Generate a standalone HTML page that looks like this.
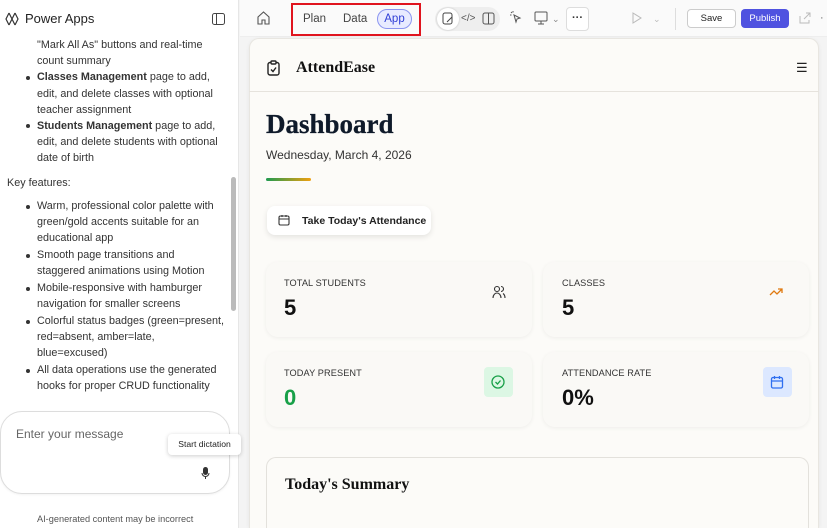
<!DOCTYPE html>
<html style="overflow:hidden;width:827px;height:528px"><head><meta charset="utf-8"><style>
*{margin:0;padding:0;box-sizing:border-box}
html,body{overflow:hidden}
body{width:827px;height:528px;font-family:"Liberation Sans",sans-serif;background:#f4f4f4;position:relative;color:#242424}
.a{position:absolute}
#side{left:0;top:0;width:239px;height:528px;background:#fff;border-right:1px solid #e6e6e6}
.t{position:absolute;font-size:10.8px;color:#333;white-space:nowrap;line-height:16px}
.dot{position:absolute;width:4px;height:4px;border-radius:50%;background:#333}
.serif{font-family:"Liberation Serif",serif;font-weight:bold}
.card{position:absolute;background:#faf9f6;border-radius:12px;box-shadow:0 1px 4px rgba(0,0,0,.06)}
.lbl{position:absolute;font-size:9.2px;color:#333;letter-spacing:.1px}
.num{position:absolute;font-size:22px;font-weight:bold;color:#111}
</style></head><body>
<div id="side" class="a">
 <svg class="a" style="left:5px;top:12px" width="14" height="15" viewBox="0 0 14 15" fill="none" stroke="#333" stroke-width="1.2"><path d="M4 1L1 7l3 6M10 1l3 6-3 6M4 1l6 12M10 1L4 13"/></svg>
 <div class="t" style="left:25px;top:11px;font-size:13px;color:#222">Power Apps</div>
 <svg class="a" style="left:212px;top:13px" width="13" height="12" viewBox="0 0 13 12" fill="none" stroke="#444"><rect x=".5" y=".5" width="12" height="11" rx="2"/><path d="M4.5 1v10"/></svg>
 <div class="t" style="left:37px;top:37px">"Mark All As" buttons and real-time</div>
 <div class="t" style="left:37px;top:53px">count summary</div>
 <div class="dot" style="left:26px;top:76px"></div>
 <div class="t" style="left:37px;top:69px"><b>Classes Management</b> page to add,</div>
 <div class="t" style="left:37px;top:86px">edit, and delete classes with optional</div>
 <div class="t" style="left:37px;top:102px">teacher assignment</div>
 <div class="dot" style="left:26px;top:124px"></div>
 <div class="t" style="left:37px;top:118px"><b>Students Management</b> page to add,</div>
 <div class="t" style="left:37px;top:134px">edit, and delete students with optional</div>
 <div class="t" style="left:37px;top:150px">date of birth</div>
 <div class="t" style="left:7px;top:175px">Key features:</div>
 <div class="dot" style="left:26px;top:205px"></div>
 <div class="t" style="left:37px;top:198px">Warm, professional color palette with</div>
 <div class="t" style="left:37px;top:214px">green/gold accents suitable for an</div>
 <div class="t" style="left:37px;top:230px">educational app</div>
 <div class="dot" style="left:26px;top:254px"></div>
 <div class="t" style="left:37px;top:247px">Smooth page transitions and</div>
 <div class="t" style="left:37px;top:263px">staggered animations using Motion</div>
 <div class="dot" style="left:26px;top:287px"></div>
 <div class="t" style="left:37px;top:280px">Mobile-responsive with hamburger</div>
 <div class="t" style="left:37px;top:296px">navigation for smaller screens</div>
 <div class="dot" style="left:26px;top:320px"></div>
 <div class="t" style="left:37px;top:313px">Colorful status badges (green=present,</div>
 <div class="t" style="left:37px;top:329px">red=absent, amber=late,</div>
 <div class="t" style="left:37px;top:345px">blue=excused)</div>
 <div class="dot" style="left:26px;top:369px"></div>
 <div class="t" style="left:37px;top:362px">All data operations use the generated</div>
 <div class="t" style="left:37px;top:378px">hooks for proper CRUD functionality</div>
 <div class="a" style="left:231px;top:177px;width:5px;height:134px;background:#bbb;border-radius:3px"></div>
 <div class="a" style="left:0;top:411px;width:230px;height:83px;border:1px solid #ddd;border-radius:22px;background:#fff;box-shadow:0 1px 2px rgba(0,0,0,.05)"></div>
 <div class="t" style="left:16px;top:426px;font-size:12px;color:#666">Enter your message</div>
 <div class="a" style="left:168px;top:434px;width:73px;height:21px;background:#fff;border-radius:4px;box-shadow:0 1px 4px rgba(0,0,0,.2);font-size:8.6px;color:#222;line-height:21px;text-align:center">Start dictation</div>
 <svg class="a" style="left:201px;top:467px" width="9" height="13" viewBox="0 0 9 13"><rect x="2" y="0" width="5" height="8" rx="2.5" fill="#333"/><path d="M1 6a3.5 3.5 0 0 0 7 0M4.5 10v2" stroke="#333" fill="none"/></svg>
 <div class="t" style="left:37px;top:511px;font-size:9.2px;color:#555">AI-generated content may be incorrect</div>
</div>
<div class="a" style="left:240px;top:0;width:587px;height:37px;background:#fafafa;border-bottom:1px solid #eee"></div>
<svg class="a" style="left:257px;top:11px" width="13" height="14" viewBox="0 0 13 14" fill="none" stroke="#555" stroke-width="1.1"><path d="M1 6l5.5-5 5.5 5v7H8V9H5v4H1z"/></svg>
<div class="a" style="left:291px;top:3px;width:130px;height:33px;border:2px solid #e0141e"></div>
<div class="t" style="left:303px;top:11px;font-size:11.5px;color:#444">Plan</div>
<div class="t" style="left:343px;top:11px;font-size:11.5px;color:#444">Data</div>
<div class="a" style="left:377px;top:9px;width:35px;height:20px;border-radius:10px;background:#e8ebff;border:1px solid #8a94f0;color:#2f3ed6;font-size:11.5px;text-align:center;line-height:18px">App</div>
<div class="a" style="left:435px;top:7px;width:65px;height:24px;border-radius:12px;background:#eee"></div>
<div class="a" style="left:437px;top:8px;width:22px;height:22px;border-radius:11px;background:#fff;box-shadow:0 0 2px rgba(0,0,0,.2)"></div>
<svg class="a" style="left:442px;top:12px" width="12" height="13" viewBox="0 0 12 13" fill="none" stroke="#444"><rect x="1" y="1" width="9" height="11" rx="2"/><path d="M5 10l5-5"/></svg>
<div class="t" style="left:461px;top:11px;font-size:10px;color:#555">&lt;/&gt;</div>
<svg class="a" style="left:482px;top:12px" width="13" height="13" viewBox="0 0 13 13" fill="none" stroke="#555"><rect x="1" y="1" width="11" height="11" rx="2"/><path d="M6.5 1v11"/></svg>
<svg class="a" style="left:509px;top:11px" width="13" height="14" viewBox="0 0 13 14" fill="none" stroke="#555"><path d="M5 4l6 3-3 1-1 3z M2 1l1 1M1 4h1.5M4 0v1.5"/></svg>
<svg class="a" style="left:534px;top:11px" width="14" height="14" viewBox="0 0 14 14" fill="none" stroke="#555"><rect x="1" y="1" width="12" height="9" rx="1"/><path d="M7 10v3M4 13h6"/></svg>
<div class="t" style="left:552px;top:11px;font-size:9px;color:#888">⌄</div>
<div class="a" style="left:566px;top:7px;width:23px;height:24px;border:1px solid #ddd;border-radius:4px;background:#fff;text-align:center;font-size:11px;line-height:20px;font-weight:bold;color:#333">···</div>
<svg class="a" style="left:632px;top:12px" width="10" height="12" viewBox="0 0 10 12" fill="none" stroke="#bbb"><path d="M1 1l8 5-8 5z"/></svg>
<div class="t" style="left:653px;top:11px;font-size:9px;color:#bbb">⌄</div>
<div class="a" style="left:675px;top:8px;width:1px;height:22px;background:#ddd"></div>
<div class="a" style="left:687px;top:9px;width:49px;height:19px;border:1px solid #ccc;border-radius:4px;background:#fff;font-size:9.5px;text-align:center;line-height:17px;color:#222">Save</div>
<div class="a" style="left:741px;top:9px;width:48px;height:19px;border-radius:4px;background:#4f52e0;font-size:9.5px;text-align:center;line-height:19px;color:#fff">Publish</div>
<svg class="a" style="left:799px;top:12px" width="12" height="12" viewBox="0 0 12 12" fill="none" stroke="#bbb"><path d="M1 4v7h9V8M5 7l6-6M7 1h4v4"/></svg>
<div class="t" style="left:820px;top:10px;color:#666">·</div>
<div class="a" style="left:249px;top:38px;width:570px;height:490px;background:#fcfbf8;border:1px solid #e8e6e1;border-bottom:none;border-radius:10px 10px 0 0;box-shadow:0 1px 4px rgba(0,0,0,.06)"></div>
<div class="a" style="left:249px;top:91px;width:570px;height:1px;background:#e6e3dd"></div>
<svg class="a" style="left:267px;top:60px" width="13" height="16" viewBox="0 0 13 16" fill="none" stroke="#222" stroke-width="1.4"><rect x="1" y="2.5" width="11" height="12.5" rx="2"/><rect x="4" y="1" width="5" height="3" rx="1" fill="#fcfbf8"/><path d="M4 9.5l2 2 3-4"/></svg>
<div class="a serif" style="left:296px;top:59px;font-size:16px;color:#111">AttendEase</div>
<div class="a" style="left:796px;top:60px;font-size:13px;color:#222">☰</div>
<div class="a serif" style="left:266px;top:109px;font-size:27px;color:#0f1a2a;-webkit-text-stroke:.3px #0f1a2a">Dashboard</div>
<div class="t" style="left:266px;top:147px;font-size:12px;color:#333">Wednesday, March 4, 2026</div>
<div class="a" style="left:266px;top:178px;width:45px;height:3px;border-radius:2px;background:linear-gradient(90deg,#1f9a50,#f0a010)"></div>
<div class="a" style="left:267px;top:206px;width:164px;height:29px;background:#fff;border-radius:8px;box-shadow:0 2px 6px rgba(0,0,0,.1)"></div>
<svg class="a" style="left:278px;top:214px" width="12" height="12" viewBox="0 0 12 12" fill="none" stroke="#333" stroke-width="1.1"><rect x="1" y="2" width="10" height="9" rx="1.5"/><path d="M1 5h10M4 1v2M8 1v2"/></svg>
<div class="t" style="left:302px;top:213px;font-size:10.5px;color:#222;font-weight:bold">Take Today's Attendance</div>
<div class="card" style="left:266px;top:262px;width:266px;height:75px"></div>
<div class="card" style="left:543px;top:262px;width:266px;height:75px"></div>
<div class="card" style="left:266px;top:352px;width:266px;height:75px"></div>
<div class="card" style="left:543px;top:352px;width:266px;height:75px"></div>
<div class="lbl" style="left:284px;top:278px">TOTAL STUDENTS</div>
<div class="num" style="left:284px;top:295px">5</div>
<div class="lbl" style="left:562px;top:278px">CLASSES</div>
<div class="num" style="left:562px;top:295px">5</div>
<div class="lbl" style="left:284px;top:368px">TODAY PRESENT</div>
<div class="num" style="left:284px;top:385px;color:#18a048">0</div>
<div class="lbl" style="left:562px;top:368px">ATTENDANCE RATE</div>
<div class="num" style="left:562px;top:385px">0%</div>
<svg class="a" style="left:492px;top:285px" width="14" height="14" viewBox="0 0 14 14" fill="none" stroke="#333" stroke-width="1.1"><circle cx="5" cy="4" r="2.5"/><path d="M1 13c0-3 2-5 4-5s4 2 4 5M9 1.5a2.5 2.5 0 0 1 0 5M11 8.5c1.2.8 2 2.5 2 4.5"/></svg>
<svg class="a" style="left:769px;top:287px" width="14" height="9" viewBox="0 0 14 9" fill="none" stroke="#e07a10" stroke-width="1.3"><path d="M1 8l4-4 3 3 5-5M9 2h4v4"/></svg>
<div class="a" style="left:484px;top:367px;width:29px;height:30px;border-radius:4px;background:#dcf7e4"></div>
<svg class="a" style="left:491px;top:375px" width="14" height="14" viewBox="0 0 14 14" fill="none" stroke="#18a048" stroke-width="1.3"><circle cx="7" cy="7" r="6"/><path d="M4.5 7l2 2 3-3.5"/></svg>
<div class="a" style="left:763px;top:367px;width:29px;height:30px;border-radius:4px;background:#dce8ff"></div>
<svg class="a" style="left:770px;top:375px" width="14" height="14" viewBox="0 0 14 14" fill="none" stroke="#2f6ff0" stroke-width="1.3"><rect x="1.5" y="2.5" width="11" height="10.5" rx="1.5"/><path d="M1.5 6h11M4.5 1v3M9.5 1v3"/></svg>
<div class="a" style="left:266px;top:457px;width:543px;height:71px;background:#fcfbf8;border:1px solid #e3e1dc;border-bottom:none;border-radius:10px 10px 0 0"></div>
<div class="a serif" style="left:285px;top:476px;font-size:16px;color:#111">Today's Summary</div>
<div class="a" style="left:249px;top:522px;width:570px;height:6px;background:#f4f4f4;opacity:0"></div>
</body></html>
